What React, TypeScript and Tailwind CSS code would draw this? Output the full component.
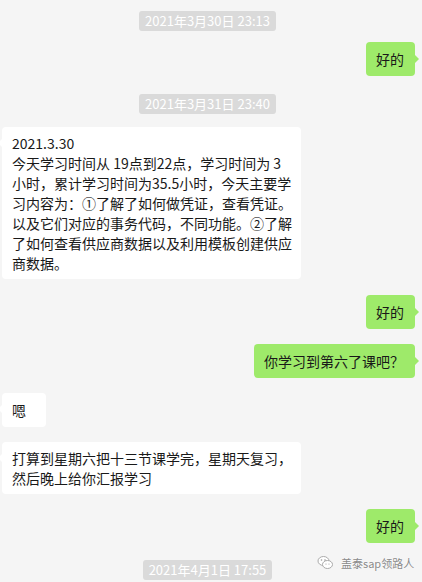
import React from "react";

const font = { fontFamily: '"Noto Sans CJK SC", "Noto Sans", sans-serif' };

function Time({ text, className = "" }: { text: string; className?: string }) {
  return (
    <div className={`flex justify-center pr-[7px] ${className}`}>
      <div className="bg-[#dadada] text-white text-[13px] leading-[20px] h-[20px] px-[6px] rounded-[3px] whitespace-nowrap">
        {text}
      </div>
    </div>
  );
}

function Right({ text, className = "" }: { text: string; className?: string }) {
  return (
    <div className={`flex justify-end pr-[7px] ${className}`}>
      <div className="relative bg-[#9eea6a] rounded-[4px] pl-[10px] pr-[11px] py-[7px] text-[14px] leading-[20px] text-[#191919] whitespace-nowrap">
        {text}
        <span className="absolute right-[-4px] top-[13px] w-0 h-0 border-y-[4px] border-y-transparent border-l-[4px] border-l-[#9eea6a]" />
      </div>
    </div>
  );
}

function Left({
  lines,
  className = "",
  w,
  py = "py-[6px]",
}: {
  lines: string[];
  className?: string;
  w: string;
  py?: string;
}) {
  return (
    <div className={`flex pl-[2px] ${className}`}>
      <div className={`relative bg-white rounded-[4px] pl-[10px] ${py} ${w} text-[14px] leading-[20px] text-[#191919]`}>
        {lines.map((l, i) => (
          <div key={i} className="whitespace-nowrap">
            {l}
          </div>
        ))}
        <span className="absolute left-[-4px] top-[12px] w-0 h-0 border-y-[4px] border-y-transparent border-r-[4px] border-r-white" />
      </div>
    </div>
  );
}

export default function App() {
  return (
    <div
      className="relative w-[422px] h-[582px] bg-[#f5f5f5] overflow-hidden [text-spacing-trim:space-all]"
      style={font}
    >
      <div className="flex flex-col">
        <Time text="2021年3月30日 23:13" className="mt-[11px]" />
        <Right text="好的" className="mt-[11px]" />
        <Time text="2021年3月31日 23:40" className="mt-[18px]" />
        <Left
          className="mt-[13px]"
          w="w-[299px]"
          lines={[
            "2021.3.30",
            "今天学习时间从 19点到22点，学习时间为 3",
            "小时，累计学习时间为35.5小时，今天主要学",
            "习内容为：①了解了如何做凭证，查看凭证。",
            "以及它们对应的事务代码，不同功能。②了解",
            "了如何查看供应商数据以及利用模板创建供应",
            "商数据。",
          ]}
        />
        <Right text="好的" className="mt-[16px]" />
        <Right text="你学习到第六了课吧？" className="mt-[15px]" />
        <Left className="mt-[15px]" w="w-[44px]" py="py-[7px]" lines={["嗯"]} />
        <Left
          className="mt-[15px]"
          w="w-[299px]"
          lines={["打算到星期六把十三节课学完，星期天复习，", "然后晚上给你汇报学习"]}
        />
        <Right text="好的" className="mt-[15px]" />
        <Time text="2021年4月1日 17:55" className="mt-[17px]" />
      </div>
      <div className="absolute left-[317px] top-[555px] flex items-center gap-[7px]">
        <svg width="17" height="15" viewBox="0 0 17 15">
          <ellipse cx="6.5" cy="6" rx="5.5" ry="4.5" fill="#fff" stroke="#aaa" strokeWidth="1" />
          <ellipse cx="10.5" cy="9.5" rx="5" ry="4" fill="#fff" stroke="#aaa" strokeWidth="1" />
          <circle cx="4.5" cy="5" r="0.8" fill="#999" />
          <circle cx="8" cy="5" r="0.8" fill="#999" />
          <circle cx="9" cy="9" r="0.6" fill="#999" />
          <circle cx="12" cy="9" r="0.6" fill="#999" />
        </svg>
        <span
          className="text-[11px] leading-[14px] text-[#8a8a8a] whitespace-nowrap"
          style={{ textShadow: "0 0 2px #fff, 0 0 1px #fff" }}
        >
          盖泰sap领路人
        </span>
      </div>
    </div>
  );
}
